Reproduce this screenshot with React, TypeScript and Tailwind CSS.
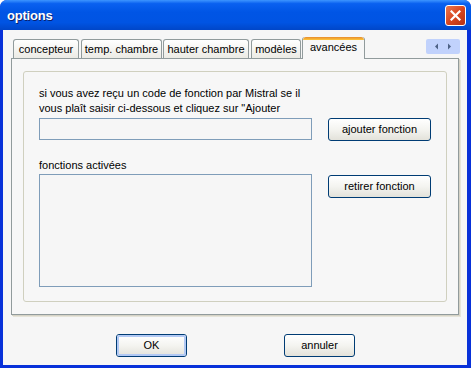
import React from "react";

type Tab = {
  label: string;
  width: string;
  margin: string;
  active?: boolean;
};

const tabs: Tab[] = [
  { label: "concepteur", width: "w-[66px]", margin: "ml-0" },
  { label: "temp. chambre", width: "w-[81px]", margin: "ml-[2px]" },
  { label: "hauter chambre", width: "w-[86px]", margin: "ml-[1px]" },
  { label: "modèles", width: "w-[50px]", margin: "ml-[2px]" },
  { label: "avancées", width: "w-[63px]", margin: "ml-[1px]", active: true },
];

function XpButton({ label, width, isDefault }: { label: string; width: string; isDefault?: boolean }) {
  return (
    <button
      type="button"
      className={`${width} block h-[23px] shrink-0 rounded-[3px] border border-[#003c74] bg-gradient-to-b from-white via-[#f4f4f0] to-[#e3e2da] p-0 text-[11px] leading-none text-black`}
    >
      <span
        className={`flex h-full w-full items-center justify-center rounded-[2px] ${
          isDefault ? "border-2 border-[#b2c9f4]" : "border border-transparent"
        }`}
      >
        {label}
      </span>
    </button>
  );
}

function TabButton({ tab }: { tab: Tab }) {
  if (tab.active) {
    return (
      <div
        className={`${tab.width} ${tab.margin} relative z-10 -mb-px flex h-[22px] flex-col overflow-hidden rounded-t-[3px] border-x border-[#919b9c] bg-[#f7f7f7]`}
      >
        <div className="h-[3px] shrink-0 rounded-t-[3px] bg-gradient-to-b from-[#e68b2c] to-[#ffc73c]" />
        <div className="flex flex-1 items-start justify-center pt-[1px] text-[11px] leading-[13px]">{tab.label}</div>
      </div>
    );
  }
  return (
    <div
      className={`${tab.width} ${tab.margin} flex h-[19px] items-center justify-center rounded-t-[3px] border border-b-0 border-[#919b9c] bg-gradient-to-b from-white to-[#ecebe5] text-[11px] leading-none`}
    >
      {tab.label}
    </div>
  );
}

export default function App() {
  return (
    <div className="h-[368px] w-[471px] bg-white font-['Liberation_Sans',Arial,sans-serif] text-black">
      <div className="flex h-full w-full flex-col overflow-hidden rounded-t-[7px] bg-[#0831d9]">
        {/* title bar */}
        <div className="flex h-[30px] shrink-0 items-center justify-between bg-[linear-gradient(to_bottom,#3d95ff_0%,#0a61f0_12%,#0055e5_40%,#0054e3_75%,#0046c8_100%)] pl-[7px] pr-[5px]">
          <span className="mt-[1px] text-[13px] font-bold tracking-[-0.2px] text-white [text-shadow:1px_1px_0_#0a1f6b]">
            options
          </span>
          <div className="flex h-[21px] w-[21px] items-center justify-center rounded-[3px] border border-white bg-gradient-to-br from-[#e9774f] via-[#d9461f] to-[#b33214]">
            <svg width="11" height="11" viewBox="0 0 11 11">
              <path d="M1.5 1.5 L9.5 9.5 M9.5 1.5 L1.5 9.5" stroke="white" strokeWidth="2.2" strokeLinecap="square" />
            </svg>
          </div>
        </div>

        {/* body */}
        <div className="mb-[3px] ml-[3px] mr-[4px] flex flex-1 flex-col bg-[#f6f6f6] pl-[8px]">
          {/* tab strip */}
          <div className="mt-[7px] flex h-[21px] items-end pl-[2px]">
            {tabs.map((tab) => (
              <TabButton key={tab.label} tab={tab} />
            ))}
            <div className="mb-[4px] ml-[61px] flex h-[15px] w-[34px] items-center justify-around rounded-[2px] bg-[#c1d2fc] px-[4px]">
              <svg width="5" height="7" viewBox="0 0 5 7">
                <path d="M4 0.5 L1 3.5 L4 6.5 Z" fill="#4d6185" />
              </svg>
              <svg width="5" height="7" viewBox="0 0 5 7">
                <path d="M1 0.5 L4 3.5 L1 6.5 Z" fill="#4d6185" />
              </svg>
            </div>
          </div>

          {/* tab panel */}
          <div className="h-[257px] w-[448px] border border-[#919b9c] bg-[#f7f7f7] px-[11px] py-[12px] shadow-[1px_1px_0_#d6d3c6,2px_2px_0_#e6e4d9]">
            <div className="flex h-full flex-col rounded-[3px] border border-[#d0d0bf] pl-[15px] pr-[15px] pt-[14px]">
              <p className="w-[273px] text-[11px] leading-[15px]">
                si vous avez reçu un code de fonction par Mistral se il vous plaît saisir ci-dessous et cliquez sur
                "Ajouter
              </p>
              <div className="mt-[2px] flex items-start gap-[16px]">
                <div className="h-[22px] w-[273px] border border-[#7f9db9] bg-[#f6f6f6]" />
                <XpButton label="ajouter fonction" width="w-[103px]" />
              </div>

              <p className="mt-[17px] text-[11px] leading-[15px]">fonctions activées</p>
              <div className="mt-[1px] flex items-start gap-[16px]">
                <div className="h-[113px] w-[273px] border border-[#7f9db9] bg-[#f6f6f6]" />
                <div className="flex pt-[1px]">
                  <XpButton label="retirer fonction" width="w-[103px]" />
                </div>
              </div>
            </div>
          </div>

          {/* dialog buttons */}
          <div className="mt-[19px] flex items-start pl-[105px]">
            <XpButton label="OK" width="w-[71px]" isDefault />
            <div className="ml-[97px] flex">
              <XpButton label="annuler" width="w-[71px]" />
            </div>
          </div>
        </div>
      </div>
    </div>
  );
}
